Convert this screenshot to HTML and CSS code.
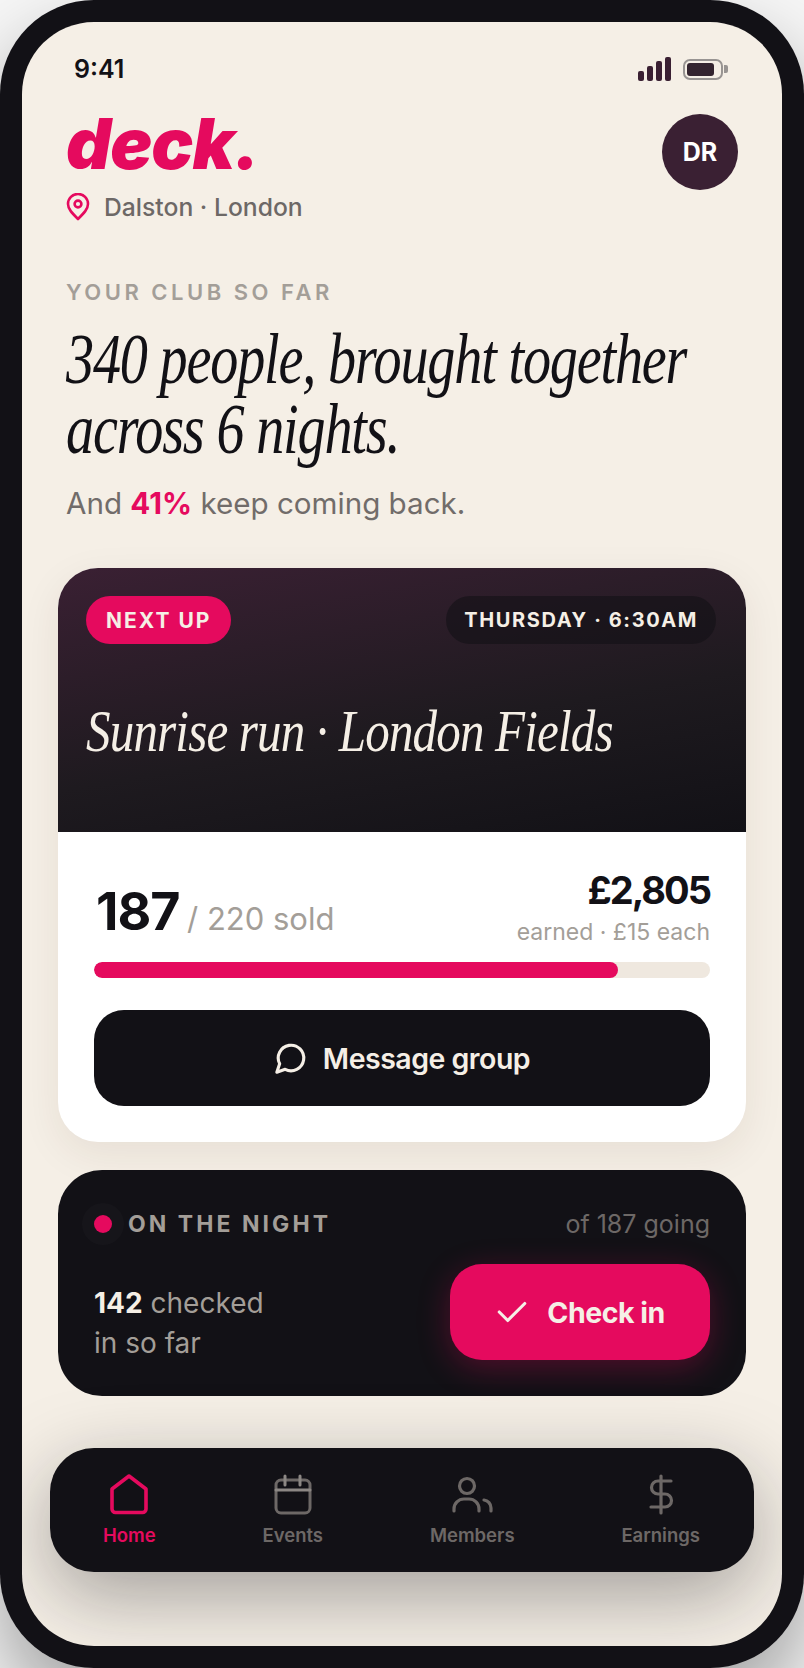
FILE: index.html
```html
<!DOCTYPE html>
<html lang="en">
<head>
    <meta charset="UTF-8">
    <meta name="viewport" content="width=device-width, initial-scale=1.0">
    <title>deck. - Home</title>
    <link rel="stylesheet" href="styles.css">
</head>
<body>
    <div class="phone">
        <div class="screen">
            <div class="status-bar">
                <span class="time">9:41</span>
                <div class="status-icons">
                    <div class="signal">
                        <span class="bar bar-1"></span>
                        <span class="bar bar-2"></span>
                        <span class="bar bar-3"></span>
                        <span class="bar bar-4"></span>
                    </div>
                    <div class="battery"><span class="battery-fill"></span></div>
                    <span class="battery-nub"></span>
                </div>
            </div>

            <div class="header">
                <div>
                    <div class="logo">deck.</div>
                    <div class="location">
                        <svg class="pin" viewBox="0 0 24 28" fill="none" stroke="currentColor" stroke-width="2.6" stroke-linejoin="round">
                            <path d="M12 26C6 20 2 16 2 11a10 10 0 0 1 20 0c0 5-4 9-10 15Z"/>
                            <circle cx="12" cy="11" r="3.4"/>
                        </svg>
                        <span>Dalston · London</span>
                    </div>
                </div>
                <div class="avatar">DR</div>
            </div>

            <div class="intro">
                <div class="eyebrow">YOUR CLUB SO FAR</div>
                <h1 class="headline">340 people, brought together<br>across 6 nights.</h1>
                <p class="subline">And <strong>41%</strong> keep coming back.</p>
            </div>

            <div class="event-card">
                <div class="event-hero">
                    <div class="event-tags">
                        <span class="tag tag-next">NEXT UP</span>
                        <span class="tag tag-date">THURSDAY · 6:30AM</span>
                    </div>
                    <h2 class="event-title">Sunrise run · London Fields</h2>
                </div>
                <div class="event-body">
                    <div class="event-stats">
                        <div class="sold"><strong>187</strong> <span>/ 220 sold</span></div>
                        <div class="earned">
                            <strong>£2,805</strong>
                            <span>earned · £15 each</span>
                        </div>
                    </div>
                    <div class="progress"><div class="progress-fill" style="width: 85%"></div></div>
                    <button class="btn btn-dark">
                        <svg class="btn-icon" viewBox="0 0 24 24" fill="none" stroke="currentColor" stroke-width="2.2" stroke-linecap="round" stroke-linejoin="round">
                            <path d="M7.9 20A9 9 0 1 0 4 16.1L2 22Z"/>
                        </svg>
                        Message group
                    </button>
                </div>
            </div>

            <div class="night-card">
                <div class="night-top">
                    <div class="night-label"><span class="dot"></span>ON THE NIGHT</div>
                    <div class="night-going">of 187 going</div>
                </div>
                <div class="night-bottom">
                    <p class="night-count"><strong>142</strong> checked<br>in so far</p>
                    <button class="btn btn-pink">
                        <svg class="btn-icon" viewBox="0 0 24 24" fill="none" stroke="currentColor" stroke-width="2.2" stroke-linecap="round" stroke-linejoin="round">
                            <path d="M21 6 9 18l-6-6"/>
                        </svg>
                        Check in
                    </button>
                </div>
            </div>

            <nav class="tabbar">
                <a class="tab active">
                    <svg class="tab-icon" viewBox="0 0 40 42" fill="none" stroke="currentColor" stroke-width="3.6" stroke-linejoin="round">
                        <path d="M20 2 37 15V35a3.500 3.500 0 0 1-3.500 3.500H6.500A3.500 3.500 0 0 1 3 35V15Z"/>
                    </svg>
                    Home
                </a>
                <a class="tab">
                    <svg class="tab-icon" viewBox="0 0 40 42" fill="none" stroke="currentColor" stroke-width="3" stroke-linecap="round" stroke-linejoin="round">
                        <rect x="3" y="6" width="34" height="33" rx="5"/>
                        <path class="cal-lines" d="M12 2v9M27 2v9M3 16h34"/>
                    </svg>
                    Events
                </a>
                <a class="tab">
                    <svg class="tab-icon icon-members" viewBox="0 0 42 42" fill="none" stroke="currentColor" stroke-width="3.2" stroke-linecap="round" stroke-linejoin="round">
                        <circle cx="16" cy="12" r="7.500"/>
                        <path d="M3 37v-2a10 10 0 0 1 10-10h5a10 10 0 0 1 10 10v2"/>
                        <path d="M33 26a8 8 0 0 1 7 8v3"/>
                    </svg>
                    Members
                </a>
                <a class="tab">
                    <svg class="tab-icon icon-dollar" viewBox="0 0 26 42" fill="none" stroke="currentColor" stroke-width="3.2" stroke-linecap="round" stroke-linejoin="round">
                        <path d="M13 2v37M23 7H10a6.500 6.500 0 0 0 0 13h7a6.500 6.500 0 0 1 0 13H3"/>
                    </svg>
                    Earnings
                </a>
            </nav>
        </div>
    </div>
</body>
</html>
```

FILE: styles.css
```css
:root {
    --pink: #e50a5e;
    --ink: #121116;
    --plum: #3a2033;
    --cream: #f5efe6;
    --grey: #a39e98;
    --grey-dark: #6d6866;
}

* {
    margin: 0;
    padding: 0;
    box-sizing: border-box;
}

body {
    width: 804px;
    height: 1668px;
    overflow: hidden;
    background-color: #f6f6f6;
    font-family: 'Inter', 'Liberation Sans', sans-serif;
}

.phone {
    width: 804px;
    height: 1668px;
    padding: 22px;
    border-radius: 94px;
    background-color: var(--ink);
    box-shadow: 0 40px 80px rgba(0, 0, 0, 0.35);
}

.screen {
    height: 100%;
    border-radius: 72px;
    background-color: var(--cream);
    overflow: hidden;
    display: flex;
    flex-direction: column;
}

/* status bar */
.status-bar {
    display: flex;
    justify-content: space-between;
    align-items: center;
    padding: 32px 54px 0 52px;
    height: 62px;
}

.time {
    font-size: 25px;
    font-weight: 600;
    color: var(--ink);
}

.status-icons {
    display: flex;
    align-items: center;
}

.signal {
    display: flex;
    align-items: flex-end;
    gap: 3px;
    height: 24px;
    margin-right: 12px;
}

.bar {
    width: 6px;
    border-radius: 2px;
    background-color: var(--plum);
}

.bar-1 { height: 10px; }
.bar-2 { height: 15px; }
.bar-3 { height: 20px; }
.bar-4 { height: 24px; }

.battery {
    width: 40px;
    height: 21px;
    padding: 2px;
    border: 2px solid #989492;
    border-radius: 7px;
}

.battery-fill {
    display: block;
    width: 85%;
    height: 100%;
    border-radius: 3px;
    background-color: #33242f;
}

.battery-nub {
    width: 4px;
    height: 8px;
    margin-left: 1px;
    border-radius: 0 2px 2px 0;
    background-color: #989492;
}

/* header */
.header {
    display: flex;
    justify-content: space-between;
    align-items: flex-start;
    padding: 30px 44px 0;
}

.logo {
    font-size: 70px;
    font-weight: 900;
    font-style: italic;
    line-height: 59px;
    letter-spacing: -1px;
    color: var(--pink);
}

.location {
    display: flex;
    align-items: center;
    gap: 14px;
    margin-top: 19px;
    font-size: 24.700px;
    font-weight: 500;
    color: var(--grey-dark);
}

.pin {
    width: 24px;
    height: 28px;
    color: var(--pink);
}

.avatar {
    width: 76px;
    height: 76px;
    border-radius: 50%;
    background-color: var(--plum);
    color: #fff;
    font-size: 25px;
    font-weight: 700;
    display: flex;
    justify-content: center;
    align-items: center;
}

/* intro copy */
.intro {
    padding: 0 44px;
    margin-top: 56px;
}

.eyebrow {
    font-size: 22px;
    font-weight: 600;
    letter-spacing: 3.500px;
    line-height: 28px;
    color: var(--grey);
}

.headline {
    font-family: 'Liberation Serif', serif;
    font-size: 72px;
    font-weight: normal;
    font-style: italic;
    line-height: 70px;
    letter-spacing: -1.500px;
    color: var(--ink);
    white-space: nowrap;
    margin-top: 18px;
    transform: scaleX(0.78);
    transform-origin: left center;
}

.subline {
    font-size: 29.600px;
    line-height: 40px;
    margin-top: 19px;
    color: #716c6a;
}

.subline strong {
    color: var(--pink);
}

/* next event card */
.event-card {
    margin: 45px 36px 0;
    border-radius: 40px;
    background-color: #fff;
    overflow: hidden;
    box-shadow: 0 12px 40px rgba(70, 40, 10, 0.08);
    flex-shrink: 0;
}

.event-hero {
    height: 264px;
    padding: 28px 30px 0 28px;
    background: linear-gradient(170deg, var(--plum) 0%, #1e1a1f 58%, var(--ink) 100%);
}

.event-tags {
    display: flex;
    justify-content: space-between;
}

.tag {
    height: 48px;
    padding: 0 20px;
    border-radius: 24px;
    font-size: 21px;
    font-weight: 700;
    letter-spacing: 2px;
    color: var(--cream);
    display: flex;
    align-items: center;
}

.tag-next {
    background-color: var(--pink);
}

.tag-date {
    padding: 0 18px;
    font-size: 20px;
    letter-spacing: 1.600px;
    background-color: rgba(18, 17, 22, 0.6);
}

.event-title {
    font-family: 'Liberation Serif', serif;
    font-size: 60px;
    font-weight: normal;
    font-style: italic;
    line-height: 64px;
    letter-spacing: -1px;
    color: var(--cream);
    white-space: nowrap;
    margin-top: 55px;
    transform: scaleX(0.817);
    transform-origin: left center;
}

.event-body {
    padding: 35px 36px 36px;
}

.event-stats {
    display: flex;
    justify-content: space-between;
    align-items: flex-end;
}

.sold {
    margin-bottom: 3px;
    padding-left: 2px;
}

.sold strong {
    font-size: 52px;
    font-weight: 700;
    letter-spacing: -1px;
    color: var(--ink);
}

.sold span {
    font-size: 31px;
    margin-left: 3px;
    color: var(--grey);
}

.earned {
    text-align: right;
}

.earned strong {
    display: block;
    font-size: 38px;
    line-height: 46px;
    letter-spacing: -2px;
    color: var(--ink);
}

.earned span {
    display: block;
    margin-top: 5px;
    font-size: 23px;
    color: var(--grey);
}

.progress {
    height: 16px;
    margin-top: 16px;
    border-radius: 8px;
    background-color: #efe8df;
    overflow: hidden;
}

.progress-fill {
    height: 100%;
    border-radius: 8px;
    background-color: var(--pink);
}

.btn {
    height: 96px;
    border: none;
    font-family: inherit;
    font-size: 28.500px;
    font-weight: 600;
    letter-spacing: -0.500px;
    color: var(--cream);
    display: flex;
    justify-content: center;
    align-items: center;
    gap: 15px;
}

.btn-dark {
    width: 100%;
    margin-top: 32px;
    border-radius: 30px;
    background-color: var(--ink);
}

.btn-pink {
    width: 260px;
    gap: 18px;
    font-weight: 700;
    border-radius: 32px;
    background-color: var(--pink);
    box-shadow: 0 8px 32px rgba(229, 10, 94, 0.3);
}

.btn-icon {
    width: 34px;
    height: 34px;
}

/* check-in card */
.night-card {
    margin: 28px 36px 0;
    padding: 30px 36px 36px;
    height: 226px;
    border-radius: 44px;
    background-color: var(--ink);
    flex-shrink: 0;
}

.night-top {
    display: flex;
    justify-content: space-between;
    align-items: center;
    height: 48px;
}

.night-label {
    display: flex;
    align-items: center;
    gap: 16px;
    font-size: 23px;
    font-weight: 700;
    letter-spacing: 3.050px;
    color: var(--grey);
}

.dot {
    width: 18px;
    height: 18px;
    border-radius: 50%;
    background-color: var(--pink);
    box-shadow: 0 0 0 12px rgba(255, 255, 255, 0.02);
}

.night-going {
    font-size: 25px;
    color: var(--grey-dark);
}

.night-bottom {
    display: flex;
    justify-content: space-between;
    align-items: center;
    margin-top: 13px;
}

.night-count {
    font-size: 28px;
    line-height: 40px;
    padding-top: 22px;
    color: var(--grey);
}

.night-count strong {
    color: var(--cream);
}

/* bottom tabs */
.tabbar {
    position: relative;
    margin: 52px 28px 0;
    height: 124px;
    padding: 26px 54px 0 53px;
    border-radius: 44px;
    background-color: var(--ink);
    box-shadow: 0 24px 80px rgba(18, 17, 22, 0.36);
    display: flex;
    justify-content: space-between;
    flex-shrink: 0;
}

.tab {
    display: flex;
    flex-direction: column;
    align-items: center;
    gap: 8px;
    font-size: 18.500px;
    font-weight: 600;
    color: var(--grey-dark);
}

.tab.active {
    color: var(--pink);
}

.tab-icon {
    width: 40px;
    height: 42px;
}

.icon-members {
    width: 42px;
}

.icon-dollar {
    width: 26px;
}

.cal-lines {
    stroke: #8c8784;
}
```
